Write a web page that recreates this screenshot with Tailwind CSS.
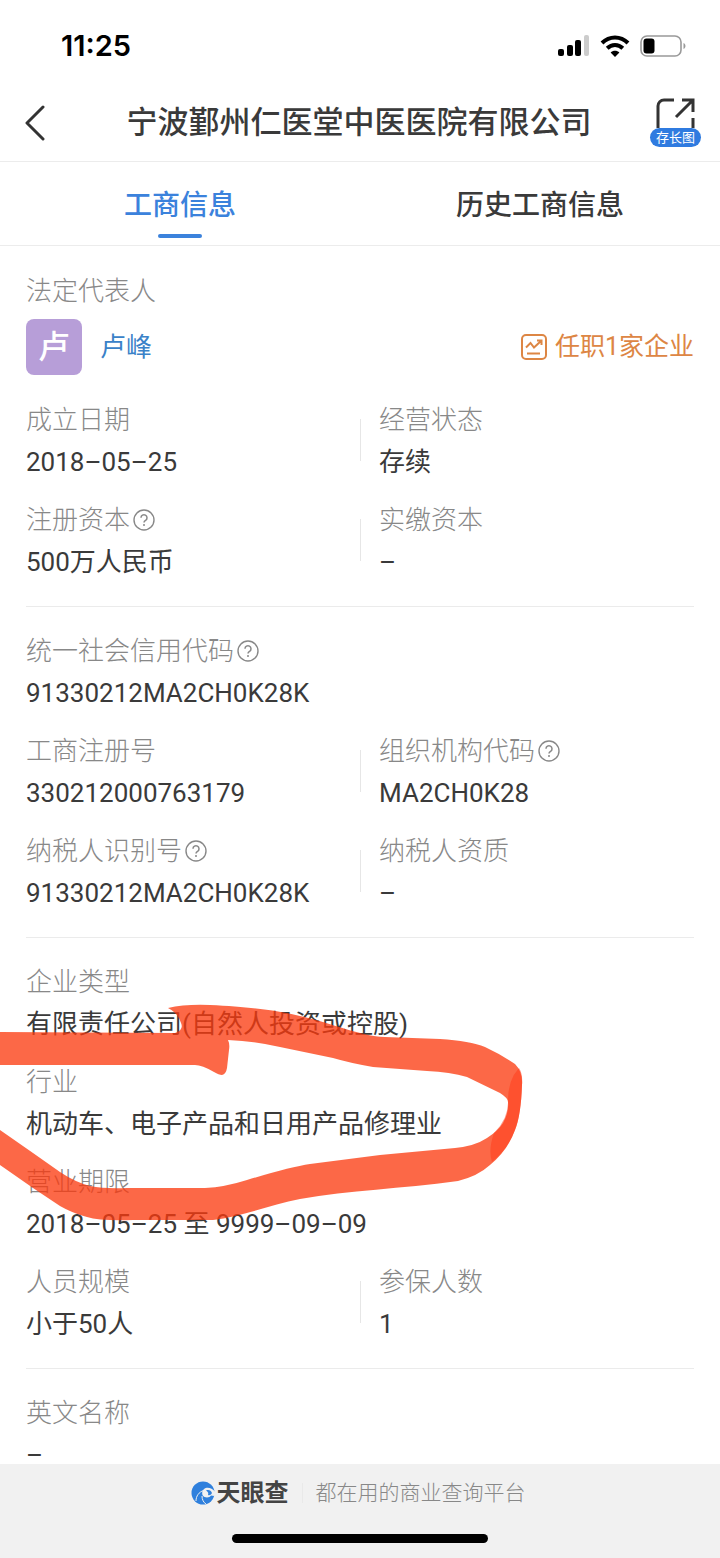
<!DOCTYPE html>
<html lang="zh-CN">
<head>
  <meta charset="UTF-8">
  <meta name="viewport" content="width=device-width, initial-scale=1.0">
  <title>工商信息</title>
  <script src="https://cdn.jsdelivr.net/npm/@tailwindcss/browser@4"></script>
</head>
<body class="h-screen flex flex-col bg-white text-[#3a3a3a] text-[26px] leading-[42px] font-[Roboto,'Noto_Sans_CJK_SC',sans-serif]">

  <!-- 图标 -->
  <svg class="hidden">
    <symbol id="help" viewBox="0 0 22 22">
      <circle cx="11" cy="11" r="10" fill="none" stroke="currentColor" stroke-width="1.4"/>
      <path d="M8 8.800a3 3 0 1 1 4.600 2.500c-1 .7-1.600 1.100-1.600 2.300" fill="none" stroke="currentColor" stroke-width="1.5"/>
      <circle cx="11" cy="16" r="1" fill="currentColor"/>
    </symbol>
  </svg>

  <!-- 状态栏 -->
  <div class="shrink-0 h-21 pt-2 pl-[61px] pr-[34px] flex items-center justify-between text-black">
    <span class="font-[Inter,sans-serif] text-[29px] font-semibold">11:25</span>
    <div class="flex items-center gap-[10px]">
      <svg class="w-8 h-[22px]" viewBox="0 0 32 22">
        <rect x="0" y="14" width="6" height="7" rx="2"/>
        <rect x="9" y="10" width="6" height="11" rx="2"/>
        <rect x="17" y="5" width="6" height="16" rx="2"/>
        <rect x="26" y="0" width="5" height="21" rx="2" fill="#ccc"/>
      </svg>
      <svg class="w-[30px] h-[22px]" viewBox="0 0 30 22">
        <path d="M2 8C9.500 .5 20.500 .5 28 8" fill="none" stroke="#000" stroke-width="4"/>
        <path d="M7.200 13.200c4.500-4.300 11.100-4.300 15.600 0" fill="none" stroke="#000" stroke-width="4"/>
        <path d="M15 22l-4.400-4.500c2.400-2.200 6.400-2.200 8.800 0z"/>
      </svg>
      <svg class="w-[46px] h-[22px]" viewBox="0 0 46 22">
        <rect x="1" y="1" width="40" height="20" rx="6" fill="none" stroke="#999" stroke-width="1.600"/>
        <rect x="3.500" y="3.500" width="11" height="15" rx="3"/>
        <path d="M43.500 8c2.600 1 2.600 5 0 6z" fill="#999"/>
      </svg>
    </div>
  </div>

  <!-- 标题栏 -->
  <header class="shrink-0 h-[78px] pl-6 pr-[19px] flex items-center justify-between border-b border-[#ececec]">
    <button type="button" aria-label="返回" class="w-11">
      <svg class="w-[22px] h-[36px]" viewBox="0 0 22 36" fill="none" stroke="#333" stroke-width="3" stroke-linecap="round" stroke-linejoin="round"><path d="M19 2L3 18l16 16"/></svg>
    </button>
    <h1 class="text-[31px] font-medium">宁波鄞州仁医堂中医医院有限公司</h1>
    <button type="button" class="w-[51px] flex flex-col items-center text-white">
      <svg class="w-10 h-[30px]" viewBox="0 0 40 30" fill="none" stroke="#333" stroke-width="3">
        <path d="M18 2H8a6 6 0 0 0-6 6v22M37 20v10"/>
        <path d="M26 2h11v12M37 2L20 19"/>
      </svg>
      <span class="w-full h-[19px] rounded-full bg-[#2f7be0] text-[13px] leading-[19px]">存长图</span>
    </button>
  </header>

  <!-- 标签页 -->
  <nav class="shrink-0 h-[84px] grid grid-cols-2 text-[28px] font-medium border-b border-[#ececec]">
    <a href="#" class="flex flex-col items-center justify-end gap-[7px] pb-[7px] text-[#3b82dc]">
      工商信息
      <span class="w-11 h-1 rounded-full bg-[#3b82dc]"></span>
    </a>
    <a href="#" class="flex flex-col items-center justify-end pb-[18px]">历史工商信息</a>
  </nav>

  <main class="relative flex-1 min-h-0 overflow-y-auto [scrollbar-width:none] px-[26px] pt-6">

    <!-- 法定代表人 -->
    <section>
      <h2 class="text-[#888] font-light">法定代表人</h2>
      <div class="mt-[7px] mb-6 flex items-center">
        <div class="size-14 rounded-lg bg-[#b79ed8] text-white text-[32px] font-medium flex items-center justify-center">卢</div>
        <a href="#" class="ml-[18px] text-[#3a82c8]">卢峰</a>
        <a href="#" class="ml-auto flex items-center gap-[7px] text-[25px] text-[#dd8644]">
          <svg class="size-7" viewBox="0 0 28 28" fill="none" stroke="currentColor" stroke-width="2">
            <rect x="2" y="2" width="24" height="24" rx="4"/>
            <path d="M6 14.500l4.500-4.500 3.500 4.500 7-6.500M17 7.500h4.500v4.500M7 20.500h13"/>
          </svg>
          任职1家企业
        </a>
      </div>
    </section>

    <!-- 基本信息 -->
    <dl class="grid grid-cols-2 gap-y-4 pb-[23px] border-b border-[#ebebeb]">
      <div>
        <dt class="text-[#888] font-light">成立日期</dt>
        <dd>2018–05–25</dd>
      </div>
      <div class="relative pl-[19px] before:absolute before:left-0 before:top-5 before:h-[42px] before:w-px before:bg-[#e6e6e6]">
        <dt class="text-[#888] font-light">经营状态</dt>
        <dd>存续</dd>
      </div>
      <div>
        <dt class="flex items-center gap-[3px] text-[#888] font-light">注册资本<svg class="size-[22px]"><use href="#help"/></svg></dt>
        <dd>500万人民币</dd>
      </div>
      <div class="relative pl-[19px] before:absolute before:left-0 before:top-5 before:h-[42px] before:w-px before:bg-[#e6e6e6]">
        <dt class="text-[#888] font-light">实缴资本</dt>
        <dd>–</dd>
      </div>
    </dl>

    <!-- 代码 -->
    <dl class="grid grid-cols-2 gap-y-4 pt-[23px] pb-[23px] border-b border-[#ebebeb]">
      <div class="col-span-2">
        <dt class="flex items-center gap-[3px] text-[#888] font-light">统一社会信用代码<svg class="size-[22px]"><use href="#help"/></svg></dt>
        <dd>91330212MA2CH0K28K</dd>
      </div>
      <div>
        <dt class="text-[#888] font-light">工商注册号</dt>
        <dd>330212000763179</dd>
      </div>
      <div class="relative pl-[19px] before:absolute before:left-0 before:top-5 before:h-[42px] before:w-px before:bg-[#e6e6e6]">
        <dt class="flex items-center gap-[3px] text-[#888] font-light">组织机构代码<svg class="size-[22px]"><use href="#help"/></svg></dt>
        <dd>MA2CH0K28</dd>
      </div>
      <div>
        <dt class="flex items-center gap-[3px] text-[#888] font-light">纳税人识别号<svg class="size-[22px]"><use href="#help"/></svg></dt>
        <dd>91330212MA2CH0K28K</dd>
      </div>
      <div class="relative pl-[19px] before:absolute before:left-0 before:top-5 before:h-[42px] before:w-px before:bg-[#e6e6e6]">
        <dt class="text-[#888] font-light">纳税人资质</dt>
        <dd>–</dd>
      </div>
    </dl>

    <!-- 企业类型 / 行业 -->
    <dl class="grid grid-cols-2 gap-y-4 pt-[23px] pb-[23px] border-b border-[#ebebeb]">
      <div class="col-span-2">
        <dt class="text-[#888] font-light">企业类型</dt>
        <dd>有限责任公司(自然人投资或控股)</dd>
      </div>
      <div class="col-span-2">
        <dt class="text-[#888] font-light">行业</dt>
        <dd>机动车、电子产品和日用产品修理业</dd>
      </div>
      <div class="col-span-2">
        <dt class="text-[#888] font-light">营业期限</dt>
        <dd>2018–05–25 至 9999–09–09</dd>
      </div>
      <div>
        <dt class="text-[#888] font-light">人员规模</dt>
        <dd>小于50人</dd>
      </div>
      <div class="relative pl-[19px] before:absolute before:left-0 before:top-5 before:h-[42px] before:w-px before:bg-[#e6e6e6]">
        <dt class="text-[#888] font-light">参保人数</dt>
        <dd>1</dd>
      </div>
    </dl>

    <dl class="pt-[23px]">
      <dt class="text-[#888] font-light">英文名称</dt>
      <dd>–</dd>
    </dl>

    <!-- 红笔圈注 -->
    <svg class="absolute left-0 top-[754px] w-[540px] h-[240px] pointer-events-none" viewBox="0 1000 540 240">
      <g fill="#fb380d" opacity=".76">
        <path d="M168 1008Q185 1004 210 1005C250 1007 275 1010 300 1016C335 1024 360 1036 385 1037L440 1039Q470 1041 485 1047Q502 1055 515 1064Q523 1072 522 1085Q521 1115 515 1130Q508 1150 490 1165Q478 1176 458 1181C400 1189 350 1190 300 1199C270 1205 240 1217 213 1220L133 1220Q100 1221 87 1217Q72 1213 60 1206L33 1188L0 1165V1130L33 1153L60 1172Q75 1182 90 1186Q105 1189 127 1188L205 1188Q225 1187 247 1180Q290 1167 310 1164L380 1155L455 1148Q475 1146 487 1138Q498 1131 503 1123Q509 1112 508 1102Q508 1098 500 1093L467 1077Q450 1072 427 1071L373 1067Q350 1063 333 1058L280 1047Q255 1041 228 1040Q230 1044 229 1050L227 1068Q226 1074 222 1075Q219 1075 214 1072Q202 1065 195 1065H0V1032L175 1033Q184 1030 181 1023Q178 1013 168 1008Z"/>
      </g>
      <path d="M519 1068Q523 1074 522 1085Q521 1115 515 1130Q508 1149 492 1162Q488 1150 494 1133Q509 1118 508 1100Q508 1080 519 1068Z" fill="#ff3a18" opacity=".5"/>
    </svg>
  </main>

  <!-- 底部品牌栏 -->
  <footer class="relative shrink-0 h-[94px] pt-2 bg-[#f1f1f1]">
    <div class="flex items-center justify-center pr-1">
      <svg class="size-6 mr-[2px]" viewBox="0 0 24 24">
        <circle cx="12" cy="12" r="11.500" fill="#2f80dd"/>
        <path d="M24 10.500C21 7 16 5.500 13 8c-2.500 2.500-2.500 6.500.5 8 3 1.200 5.500 0 6.500-1.500l3.500.5c1-1.500 1-3 .5-4.500z" fill="#f1f1f1"/>
        <path d="M15 9.500c3-1 5 0 6 2.500-1 2-2.500 2.500-4 2 .8-1.500 0-3.500-2-4.500z" fill="#2f80dd"/>
        <path d="M5 20C5 15 8 11 12.500 9.500M15 23c-2.500-1.500-4-4.500-4-8" fill="none" stroke="#f1f1f1" stroke-width="1"/>
      </svg>
      <span class="text-2xl leading-[42px] font-bold text-[#444]">天眼查</span>
      <span class="mx-[13px] w-px h-5 bg-[#e9e9e9]"></span>
      <span class="text-[21px] font-light text-[#888]">都在用的商业查询平台</span>
    </div>
    <div class="absolute bottom-[15px] left-1/2 -translate-x-1/2 w-64 h-[9px] rounded-full bg-black"></div>
  </footer>

</body>
</html>
